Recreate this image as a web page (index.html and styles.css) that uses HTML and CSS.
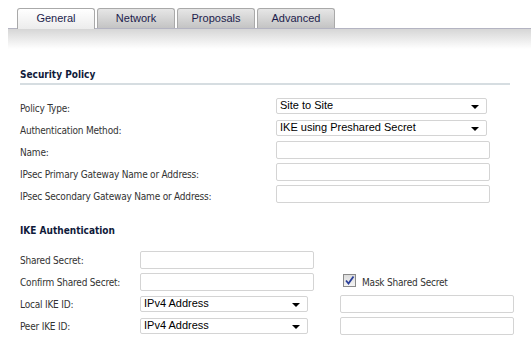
FILE: index.html
```html
<!DOCTYPE html>
<html>
<head>
<meta charset="utf-8">
<link rel="stylesheet" href="styles.css">
</head>
<body>
<div class="tabs">
  <div class="tab active">General</div>
  <div class="tab">Network</div>
  <div class="tab">Proposals</div>
  <div class="tab">Advanced</div>
</div>
<div class="band"></div>

<section class="sec sec-policy">
  <h2 class="sec-title underline">Security Policy</h2>
  <div class="row">
    <label class="lbl lbl-wide">Policy Type:</label>
    <div class="select sel-wide">Site to Site<span class="arrow"></span></div>
  </div>
  <div class="row">
    <label class="lbl lbl-wide">Authentication Method:</label>
    <div class="select sel-wide">IKE using Preshared Secret<span class="arrow"></span></div>
  </div>
  <div class="row">
    <label class="lbl lbl-wide">Name:</label>
    <div class="input in-wide"></div>
  </div>
  <div class="row">
    <label class="lbl lbl-wide">IPsec Primary Gateway Name or Address:</label>
    <div class="input in-wide"></div>
  </div>
  <div class="row">
    <label class="lbl lbl-wide">IPsec Secondary Gateway Name or Address:</label>
    <div class="input in-wide"></div>
  </div>
</section>

<section class="sec sec-ike">
  <h2 class="sec-title">IKE Authentication</h2>
  <div class="row">
    <label class="lbl lbl-narrow">Shared Secret:</label>
    <div class="input in-mid"></div>
  </div>
  <div class="row">
    <label class="lbl lbl-narrow">Confirm Shared Secret:</label>
    <div class="input in-mid"></div>
    <div class="check-wrap">
      <span class="checkbox"><svg viewBox="0 0 13 13" width="13" height="13"><path d="M3 6.5 L5.5 9.5 L10.5 2.5" fill="none" stroke="#2a3f9a" stroke-width="1.8"/></svg></span>
      <span class="check-lbl">Mask Shared Secret</span>
    </div>
  </div>
  <div class="row">
    <label class="lbl lbl-narrow">Local IKE ID:</label>
    <div class="select sel-mid">IPv4 Address<span class="arrow"></span></div>
    <div class="input in-right"></div>
  </div>
  <div class="row">
    <label class="lbl lbl-narrow">Peer IKE ID:</label>
    <div class="select sel-mid">IPv4 Address<span class="arrow"></span></div>
    <div class="input in-right"></div>
  </div>
</section>
</body>
</html>
```

FILE: styles.css
```css
html, body {
  margin: 0;
  padding: 0;
  background: #fff;
  width: 531px;
  height: 355px;
  overflow: hidden;
}

body {
  font-family: "DejaVu Sans Condensed", "DejaVu Sans", sans-serif;
  font-size: 10px;
  letter-spacing: -0.2px;
  color: #333;
}

.tabs {
  display: flex;
  gap: 2px;
  padding: 8px 0 0 17px;
  height: 20px;
}

.tab {
  box-sizing: border-box;
  width: 78px;
  height: 20px;
  border: 1px solid #a9a9a9;
  border-bottom: none;
  border-radius: 3px 3px 0 0;
  background: linear-gradient(#e6e6e6, #c4c4c4);
  font-family: "Liberation Sans", Arial, sans-serif;
  font-size: 11px;
  letter-spacing: 0;
  color: #1c1c4c;
  text-align: center;
  line-height: 18px;
}

.tab.active {
  background: linear-gradient(#ffffff, #ececec);
  height: 21px;
  margin-bottom: -1px;
  position: relative;
  z-index: 1;
}

.band {
  margin-left: 8px;
  height: 20px;
  border-top: 1px solid #b4b4c2;
  background: linear-gradient(#d6d6d6, #ffffff);
}

.sec {
  padding-left: 20px;
}

.sec-policy {
  padding-top: 19px;
}

.sec-title {
  margin: 0;
  font-family: "DejaVu Sans Condensed", "DejaVu Sans", sans-serif;
  font-size: 10px;
  font-weight: bold;
  letter-spacing: 0;
  color: #101a3a;
  line-height: 14px;
}

.sec-title.underline {
  width: 490px;
  border-bottom: 2px solid #d6dde1;
  padding-bottom: 1px;
  margin-bottom: 10px;
}

.row {
  display: flex;
  align-items: center;
  height: 22px;
}

.lbl {
  flex: none;
  padding-top: 4px;
}

.sec-ike .lbl {
  padding-top: 1px;
}

.lbl-wide { width: 256px; }
.lbl-narrow { width: 120px; }

.select, .input {
  box-sizing: border-box;
  flex: none;
  background: #fff;
  border: 1px solid #d4d4d4;
  border-radius: 2px;
}

.select {
  position: relative;
  height: 16px;
  font-family: "Liberation Sans", Arial, sans-serif;
  font-size: 11px;
  letter-spacing: 0;
  color: #000;
  line-height: 13px;
  padding-left: 3px;
}

.arrow {
  position: absolute;
  right: 7px;
  top: 6px;
  width: 0;
  height: 0;
  border-left: 4px solid transparent;
  border-right: 4px solid transparent;
  border-top: 4px solid #000;
}

.sel-wide { width: 211px; }
.sel-mid { width: 168px; }

.input {
  height: 18px;
}

.in-wide { width: 214px; }
.in-mid { width: 174px; }
.in-right {
  width: 174px;
  margin-left: 32px;
}

.sec-ike {
  padding-top: 19px;
}

.sec-ike .sec-title {
  margin-bottom: 11px;
}

.check-wrap {
  display: flex;
  align-items: center;
  margin-left: 29px;
}

.checkbox {
  box-sizing: border-box;
  width: 13px;
  height: 13px;
  border: 1px solid #8a8a8a;
  background: linear-gradient(#dcdcdc, #f4f4f4);
  display: flex;
  margin-top: -4px;
}

.checkbox svg {
  margin: -1px;
}

.check-lbl {
  margin-left: 6px;
  padding-top: 1px;
}
```
